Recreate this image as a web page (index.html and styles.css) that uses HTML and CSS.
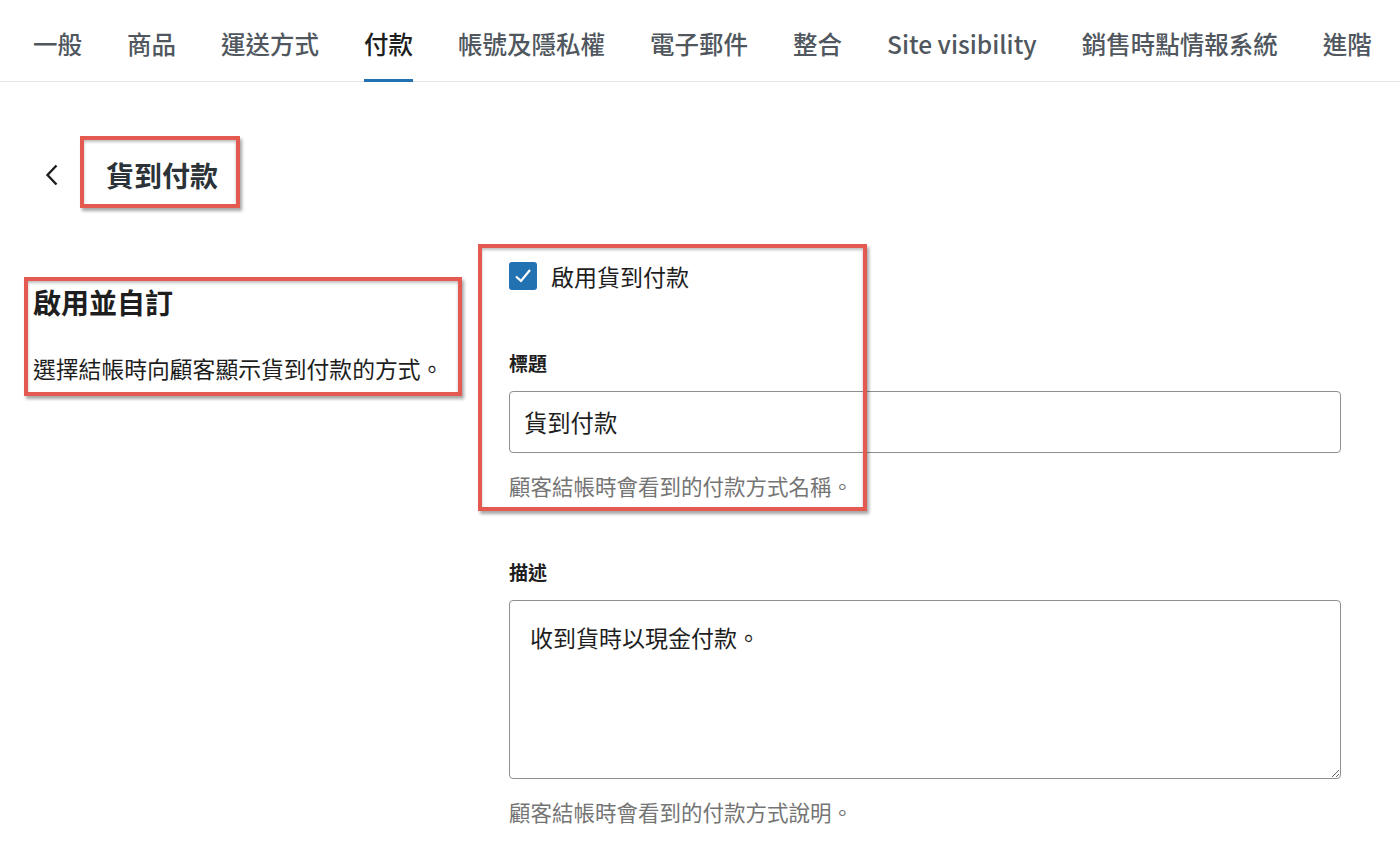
FILE: index.html
```html
<!DOCTYPE html>
<html lang="zh-Hant">

<head>
    <meta charset="UTF-8">
    <meta name="viewport" content="width=device-width, initial-scale=1.0">
    <title>付款 - 貨到付款</title>
    <link rel="stylesheet" href="styles.css">
</head>

<body>
    <div class="page">
        <nav class="tabs">
            <a class="tab" href="#">一般</a>
            <a class="tab" href="#">商品</a>
            <a class="tab" href="#">運送方式</a>
            <a class="tab active" href="#">付款</a>
            <a class="tab" href="#">帳號及隱私權</a>
            <a class="tab" href="#">電子郵件</a>
            <a class="tab" href="#">整合</a>
            <a class="tab" href="#">Site visibility</a>
            <a class="tab" href="#">銷售時點情報系統</a>
            <a class="tab" href="#">進階</a>
        </nav>

        <div class="header">
            <a class="back" href="#" aria-label="返回">
                <svg width="24" height="24" viewBox="0 0 24 24">
                    <path d="M17.5 2.5 L8.5 12 L17.5 21.5" fill="none" stroke="#1e1e1e" stroke-width="2.4" />
                </svg>
            </a>
            <h1 class="title">貨到付款</h1>
        </div>

        <div class="settings">
            <div class="intro">
                <h2>啟用並自訂</h2>
                <p>選擇結帳時向顧客顯示貨到付款的方式。</p>
            </div>

            <div class="fields">
                <label class="check">
                    <span class="box">
                        <svg width="22" height="22" viewBox="0 0 22 22">
                            <path d="M4 11.5 L9 16 L18 5" fill="none" stroke="#fff" stroke-width="2.2" />
                        </svg>
                    </span>
                    啟用貨到付款
                </label>

                <div class="field">
                    <label for="title">標題</label>
                    <input type="text" id="title" value="貨到付款">
                    <p class="help">顧客結帳時會看到的付款方式名稱。</p>
                </div>

                <div class="field">
                    <label for="desc">描述</label>
                    <textarea id="desc">收到貨時以現金付款。</textarea>
                    <p class="help">顧客結帳時會看到的付款方式說明。</p>
                </div>
            </div>
        </div>

        <!-- annotation boxes drawn over the screenshot -->
        <div class="mark mark-title"></div>
        <div class="mark mark-intro"></div>
        <div class="mark mark-fields"></div>
    </div>
</body>

</html>
```

FILE: styles.css
```css
body {
    margin: 0;
    background-color: #fff;
    font-family: "Noto Sans CJK TC", "Noto Sans", sans-serif;
    color: #1e1e1e;
}

.page {
    position: relative;
    min-height: 848px;
}

.tabs {
    display: flex;
    gap: 45px;
    padding-left: 33px;
    height: 81px;
    border-bottom: 1px solid #e2e4e7;
}

.tab {
    display: flex;
    align-items: center;
    box-sizing: border-box;
    height: 82px;
    padding-top: 7px;
    border-bottom: 3px solid transparent;
    font-size: 24.5px;
    font-weight: 500;
    color: #50575e;
    text-decoration: none;
    white-space: nowrap;
}

.tab.active {
    color: #1e1e1e;
    border-bottom-color: #2271b1;
}

.header {
    display: flex;
    align-items: center;
    height: 40px;
    margin-top: 73px;
    padding-left: 39px;
}

.back {
    display: flex;
}

.title {
    margin: 0 0 0 43px;
    font-size: 28px;
    font-weight: 700;
    line-height: 40px;
    color: #2c3338;
}

.settings {
    display: grid;
    grid-template-columns: 476px 832px;
    padding-left: 33px;
    margin-top: 67px;
}

.intro {
    padding-top: 22px;
}

.intro h2 {
    margin: 0;
    font-size: 28px;
    font-weight: 700;
    line-height: 36px;
}

.intro p {
    margin: 34px 0 0;
    font-size: 22.8px;
    line-height: 30px;
}

.check {
    display: flex;
    align-items: center;
    gap: 14px;
    height: 28px;
    font-size: 23px;
}

.box {
    display: flex;
    align-items: center;
    justify-content: center;
    flex: none;
    width: 28px;
    height: 28px;
    border-radius: 3px;
    background-color: #2271b1;
}

.field {
    margin-top: 61px;
}

.field + .field {
    margin-top: 60px;
}

.field label {
    display: block;
    font-size: 19px;
    font-weight: 700;
    line-height: 24px;
    color: #1e1e1e;
}

.field input,
.field textarea {
    display: block;
    width: 100%;
    box-sizing: border-box;
    margin-top: 16px;
    border: 1.5px solid #8c8f94;
    border-radius: 4px;
    font-family: inherit;
    color: #1e1e1e;
    background-color: #fff;
}

.field input {
    height: 62px;
    padding: 0 14px;
    font-size: 23.3px;
}

.field textarea {
    height: 179px;
    padding: 20px 20px;
    font-size: 23px;
    line-height: 32px;
    resize: vertical;
}

.help {
    margin: 19px 0 0;
    font-size: 21.5px;
    line-height: 28px;
    color: #757575;
}

.mark {
    position: absolute;
    box-sizing: border-box;
    border: 4px solid #e55a50;
    box-shadow: 2px 3px 3px rgba(0, 0, 0, 0.35), inset 0 2px 3px rgba(0, 0, 0, 0.25);
    pointer-events: none;
}

.mark-title {
    left: 80px;
    top: 136px;
    width: 160px;
    height: 72px;
}

.mark-intro {
    left: 24px;
    top: 277px;
    width: 438px;
    height: 119px;
}

.mark-fields {
    left: 478px;
    top: 244px;
    width: 389px;
    height: 267px;
}
```
